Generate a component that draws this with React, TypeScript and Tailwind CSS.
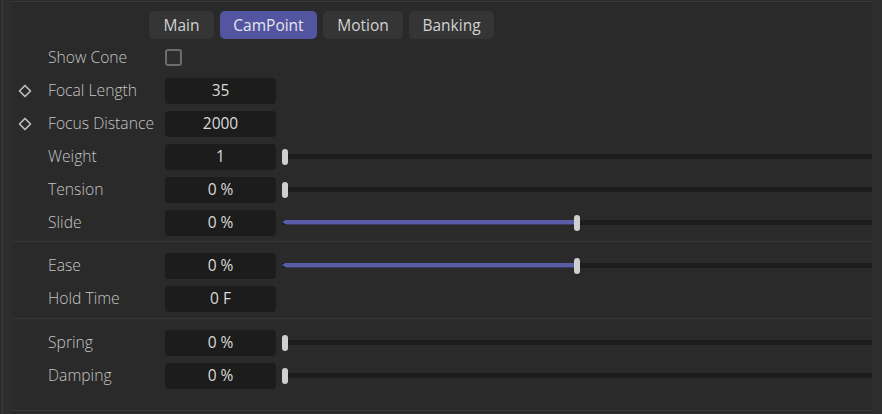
import React from 'react';

type Row = {
  label: string;
  value?: string;
  keyframe?: boolean;
  checkbox?: boolean;
  slider?: number;
  fill?: boolean;
};

const groups: Row[][] = [
  [
    { label: 'Show Cone', checkbox: true },
    { label: 'Focal Length', value: '35', keyframe: true },
    { label: 'Focus Distance', value: '2000', keyframe: true },
    { label: 'Weight', value: '1', slider: 0 },
    { label: 'Tension', value: '0 %', slider: 0 },
    { label: 'Slide', value: '0 %', slider: 0.5, fill: true },
  ],
  [
    { label: 'Ease', value: '0 %', slider: 0.5, fill: true },
    { label: 'Hold Time', value: '0 F' },
  ],
  [
    { label: 'Spring', value: '0 %', slider: 0 },
    { label: 'Damping', value: '0 %', slider: 0 },
  ],
];

const tabs = [
  { name: 'Main', w: 'w-[65px]' },
  { name: 'CamPoint', w: 'w-[97px]', active: true },
  { name: 'Motion', w: 'w-[80px]' },
  { name: 'Banking', w: 'w-[85px]' },
];

const Diamond = () => (
  <svg width="14" height="14" viewBox="0 0 14 14">
    <polygon points="7,1.5 12.5,7 7,12.5 1.5,7" fill="none" stroke="#bdbdbd" strokeWidth="1.7" strokeLinejoin="round" />
  </svg>
);

const Slider = ({ pct, fill }: { pct: number; fill?: boolean }) => (
  <div className="relative ml-[6px] h-[18px] flex-1">
    <div className="absolute left-0 right-0 top-[6px] h-[5px] bg-[#1d1d1d]" />
    {fill && (
      <div
        className="absolute top-[6px] h-[5px] bg-[#5a5ca8] [clip-path:polygon(4px_0,100%_0,100%_100%,4px_100%,0_50%)]"
        style={{ left: 0, width: `${pct * 584 + 3}px` }}
      />
    )}
    <div
      className="absolute top-[1px] h-[16px] w-[6px] rounded-[3px] bg-[#cfcfcf]"
      style={{ left: `${pct * 584}px` }}
    />
  </div>
);

const FieldRow = ({ row }: { row: Row }) => (
  <div className="flex h-[33px] items-center">
    <div className="flex w-[36px] items-center pl-[6px]">{row.keyframe && <Diamond />}</div>
    <div className="w-[117px] text-[15.7px] font-light text-[#c4c4c4]">{row.label}</div>
    {row.checkbox ? (
      <div className="h-[17px] w-[17px] rounded-[3px] border-2 border-[#6c6c6c] bg-[#2e2e2e]" />
    ) : (
      <div className="flex h-[26px] w-[111px] items-center justify-center rounded-[4px] bg-[#1c1c1c] text-[15.5px] text-[#dadada]">
        {row.value}
      </div>
    )}
    {row.slider !== undefined && <Slider pct={row.slider} fill={row.fill} />}
  </div>
);

export default function App() {
  return (
    <div
      className="h-[414px] w-[882px] overflow-hidden bg-[#2d2d2d]"
      style={{ fontFamily: '"Open Sans", "Liberation Sans", Arial, sans-serif' }}
    >
      <div className="flex h-full">
        <div className="ml-[2px] w-[1px] bg-[#3b3b3b]" />
        <div className="ml-[9px] flex w-[860px] flex-col bg-[#2a2a2a]">
          <div className="mt-[1px] h-[1px] bg-[#393939]" />
          <div className="mt-[9px] flex h-[28px] gap-[6px] pl-[137px]">
            {tabs.map((t) => (
              <div
                key={t.name}
                className={`flex items-center justify-center rounded-[5px] pt-[2px] text-[15.5px] ${t.w} ${
                  t.active ? 'bg-[#5355a0] text-[#e6e6ee]' : 'bg-[#353535] text-[#d2d2d2]'
                }`}
              >
                {t.name}
              </div>
            ))}
          </div>
          <div className="mt-[2px]">
            {groups[0].map((r) => (
              <FieldRow key={r.label} row={r} />
            ))}
          </div>
          <div className="mb-[7px] mt-[2px] h-[1px] bg-[#363636]" />
          {groups[1].map((r) => (
            <FieldRow key={r.label} row={r} />
          ))}
          <div className="mb-[7px] mt-[3px] h-[1px] bg-[#363636]" />
          {groups[2].map((r) => (
            <FieldRow key={r.label} row={r} />
          ))}
          <div className="mt-[18px] h-[1px] bg-[#393939]" />
        </div>
      </div>
    </div>
  );
}
